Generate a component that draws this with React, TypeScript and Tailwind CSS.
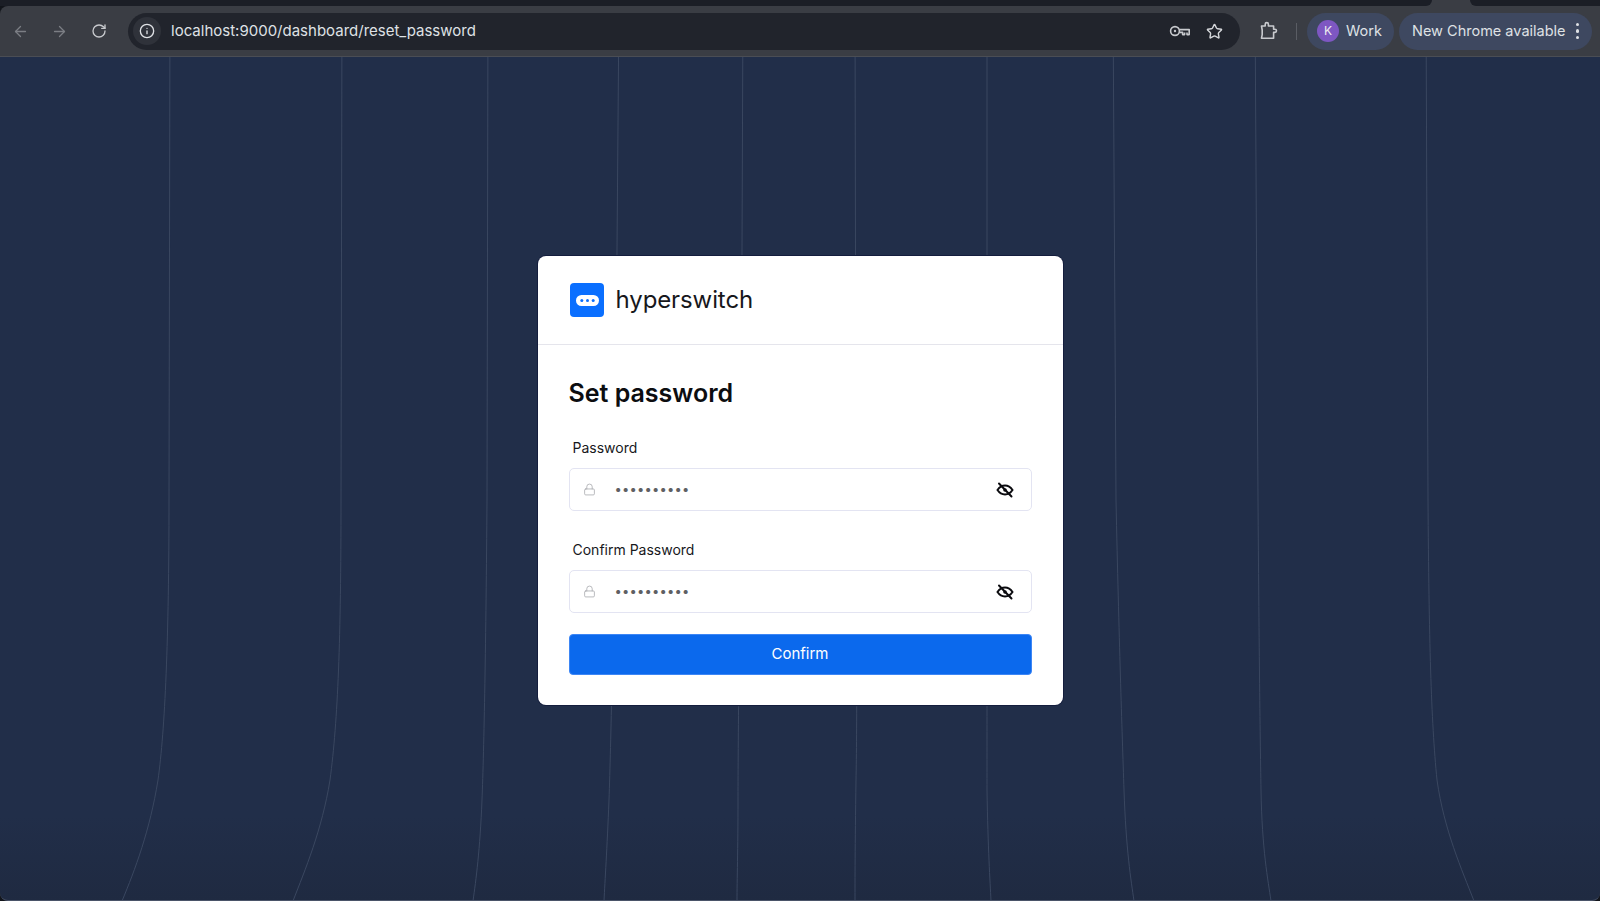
import { Info, ArrowLeft, ArrowRight, RotateCw, Star, Lock } from "lucide-react";

const curves = [
  "M170 0 L169 500 C169 640 165 730 158 780 C150 830 135 870 122 901",
  "M342 0 L341 500 C341 640 338 720 330 780 C322 830 305 870 293 901",
  "M488 0 L487 500 C486 640 484 750 482 800 C480 850 476 880 473 901",
  "M619 0 L615 500 C613 640 611 740 609 800 C607 850 605 880 604 901",
  "M743 0 L741 500 C739 640 738 760 738 800 C738 850 737 880 737 901",
  "M855 0 L856 500 C857 640 857 730 856 780 C855 850 855 880 855 901",
  "M987 0 L987 500 C987 640 987 730 987 790 C988 850 990 880 991 901",
  "M1113 0 L1116 500 C1119 640 1122 730 1124 790 C1126 850 1131 880 1134 901",
  "M1255 0 L1258 500 C1259 640 1260 730 1261 790 C1262 850 1268 880 1271 901",
  "M1426 0 L1428 500 C1429 640 1431 720 1437 780 C1444 830 1462 870 1474 901",
];

function KeyIcon() {
  return (
    <svg width="22" height="14" viewBox="0 0 22 14" fill="none" stroke="#c8cace" strokeWidth="1.6">
      <circle cx="6" cy="7" r="4.4" />
      <circle cx="6" cy="7" r="1.2" fill="#c8cace" stroke="none" />
      <path d="M10.4 5.6H20.2V10.6H18V8.4M15.6 8.4V10.6H13.6V8.4H10.4" strokeLinejoin="round" />
    </svg>
  );
}

function ExtensionIcon() {
  return (
    <svg width="20" height="20" viewBox="0 0 20 20" fill="none" stroke="#c8cace" strokeWidth="1.6" strokeLinejoin="round">
      <path d="M3.5 5H7.2V3.2C7.2 2.2 7.9 1.6 8.8 1.6C9.7 1.6 10.4 2.2 10.4 3.2V5H15.6V8.2H16.9C17.9 8.2 18.5 8.9 18.5 9.8C18.5 10.7 17.9 11.4 16.9 11.4H15.6V17.2H3.5L4.2 13.6V9L3.5 5Z" />
    </svg>
  );
}

function EyeOff() {
  return (
    <svg width="18" height="16" viewBox="0 0 18 16" fill="none" stroke="#0b0b0f" strokeWidth="2" strokeLinecap="round">
      <path d="M1.5 8C3.5 5 6 3.6 9 3.6C12 3.6 14.5 5 16.5 8C14.5 11 12 12.4 9 12.4C6 12.4 3.5 11 1.5 8Z" />
      <circle cx="9" cy="8" r="1.8" fill="#0b0b0f" stroke="none" />
      <path d="M3 1.5L15.5 14.5" stroke="#0b0b0f" />
    </svg>
  );
}

function PasswordField({ label }: { label: string }) {
  return (
    <div className="flex flex-col">
      <label className="h-[20px] pl-1 text-[14px] leading-[20px] text-[#17181c]">{label}</label>
      <div className="mt-[10px] flex h-[43px] items-center rounded-[5px] border border-[#e3e4f2] bg-white pl-[13px] pr-[17px]">
        <Lock size={13} strokeWidth={1.4} className="text-[#a4a5a9]" />
        <span className="ml-[19px] flex-1 text-[13px] leading-none tracking-[0.2px] text-[#5e5f63]">••••••••••</span>
        <EyeOff />
      </div>
    </div>
  );
}

export default function App() {
  return (
    <div className="flex h-[901px] w-[1600px] flex-col overflow-hidden bg-[#12151b] font-['Inter','Liberation_Sans',sans-serif]">
      <div className="relative h-[6px] shrink-0 bg-[#3a3d44]">
        <div className="h-[6px] w-[1432px] rounded-br-[6px] bg-[#1b1e26]" />
        <div className="absolute right-0 top-0 h-[6px] w-[130px] rounded-bl-[6px] bg-[#1b1e26]" />
      </div>
      <header className="flex h-[51px] shrink-0 items-center rounded-tl-[8px] border-b border-[#4a4d54] bg-[#3a3d44] pl-[12px] pr-[6px]">
        <ArrowLeft size={17} strokeWidth={1.8} className="text-[#7b7e84]" />
        <ArrowRight size={17} strokeWidth={1.8} className="ml-[22px] text-[#7b7e84]" />
        <RotateCw size={16} strokeWidth={2} className="ml-[23px] text-[#c8cace]" />
        <div className="ml-[21px] flex h-[37px] w-[1112px] items-center rounded-full bg-[#21242c] pl-[5px] pr-[17px]">
          <div className="flex h-[28px] w-[28px] items-center justify-center rounded-full bg-[#2f323a]">
            <Info size={16} strokeWidth={2} className="text-[#dfe1e5]" />
          </div>
          <span className="ml-[10px] flex-1 text-[15px] text-[#dfe1e5]">localhost:9000/dashboard/reset_password</span>
          <KeyIcon />
          <Star size={17} strokeWidth={2} className="ml-[15px] text-[#d5d7db]" />
        </div>
        <div className="ml-[18px]"><ExtensionIcon /></div>
        <div className="ml-[18px] h-[17px] w-px bg-[#5a5d64]" />
        <div className="ml-[10px] flex h-[37px] w-[87px] items-center rounded-full bg-[#3e4860] pl-[10px]">
          <div className="flex h-[22px] w-[22px] items-center justify-center rounded-full bg-[#7e57c2] text-[12px] text-[#eee]">K</div>
          <span className="ml-[7px] text-[14.5px] text-[#dfe1e5]">Work</span>
        </div>
        <div className="ml-[5px] flex h-[37px] w-[193px] items-center rounded-full bg-[#3e4860] pl-[13px]">
          <span className="whitespace-nowrap text-[14.5px] text-[#dfe1e5]">New Chrome available</span>
          <div className="ml-[10px] flex flex-col gap-[3px]">
            <span className="h-[3.5px] w-[3.5px] rounded-full bg-[#dfe1e5]" />
            <span className="h-[3.5px] w-[3.5px] rounded-full bg-[#dfe1e5]" />
            <span className="h-[3.5px] w-[3.5px] rounded-full bg-[#dfe1e5]" />
          </div>
        </div>
      </header>
      <main className="relative flex flex-1 items-start justify-center overflow-hidden rounded-b-[8px] border-b border-[#4a5368] bg-linear-to-b from-[#212e49] from-90% to-[#1f2a41] pt-[199px]">
        <svg className="absolute left-0 top-[-57px] h-[901px] w-[1600px]" viewBox="0 0 1600 901" fill="none" stroke="#3a4760" strokeWidth="1">
          {curves.map((d) => <path key={d} d={d} />)}
        </svg>
        <section className="relative w-[525px] rounded-[8px] bg-white shadow-[0_0_0_1px_#141d3d]">
          <div className="flex h-[89px] items-center gap-[12px] border-b border-[#e5e5ec] pl-[32px]">
            <svg width="34" height="34" viewBox="0 0 34 34">
              <rect width="34" height="34" rx="4" fill="#0a6fff" />
              <rect x="6" y="12" width="23" height="11" rx="5.5" fill="#fff" />
              <circle cx="11.8" cy="17.5" r="1.5" fill="#0a6fff" />
              <circle cx="17.5" cy="17.5" r="1.5" fill="#0a6fff" />
              <circle cx="23.2" cy="17.5" r="1.5" fill="#0a6fff" />
            </svg>
            <span className="text-[24px] leading-none tracking-[-0.1px] text-[#17181c]">hyperswitch</span>
          </div>
          <div className="flex flex-col px-[31px] pb-[30px] pt-[32px]">
            <h1 className="h-[32px] text-[25px] font-semibold leading-[32px] text-[#0c0d10]">Set password</h1>
            <div className="mt-[29px] flex flex-col gap-[29px]">
              <PasswordField label="Password" />
              <PasswordField label="Confirm Password" />
            </div>
            <button className="mt-[21px] flex h-[41px] items-center justify-center rounded-[4px] border border-[#3d86f5] bg-[#0b69ed] text-[15px] text-white">Confirm</button>
          </div>
        </section>
      </main>
    </div>
  );
}
